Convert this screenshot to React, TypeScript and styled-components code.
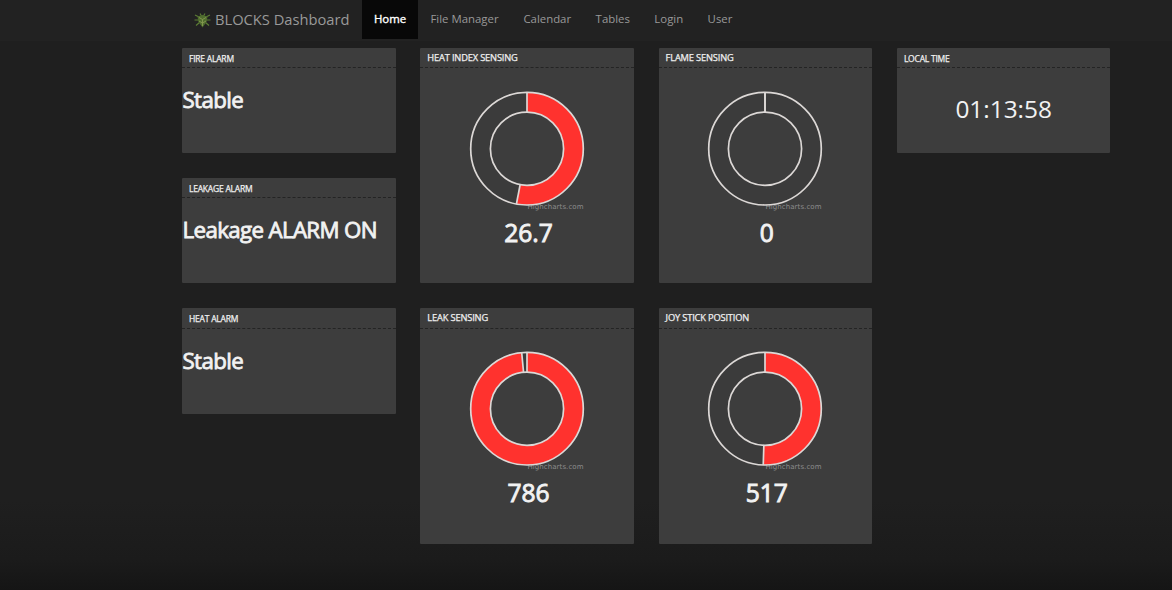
import React from 'react';
import styled, { createGlobalStyle } from 'styled-components';

const GlobalStyle = createGlobalStyle`
  * { box-sizing: border-box; }
  html, body { margin: 0; padding: 0; }
  body {
    background: #1f1f1f;
    color: #f2f2f2;
    font-family: 'Open Sans', 'Noto Sans', sans-serif;
    overflow: hidden;
  }
`;

const Page = styled.div`
  height: 590px;
  overflow: hidden;
  background: linear-gradient(to bottom, #1f1f1f 0, #1f1f1f 500px, #1b1b1b 560px, #151515 590px);
`;

const Navbar = styled.nav`
  display: flex;
  align-items: flex-start;
  height: 41px;
  padding-left: 194px;
  background: #222222;
`;

const Brand = styled.a`
  display: flex;
  align-items: center;
  width: 168px;
  height: 39px;
  padding-bottom: 1px;
  color: #999999;
  font-size: 14.7px;
  white-space: nowrap;
`;

const Logo = styled.svg`
  width: 17px;
  height: 16px;
  margin: 1px 4px 0 0;
  flex: none;
`;

const NavLink = styled.a<{ $active?: boolean; $width: number }>`
  display: flex;
  align-items: center;
  justify-content: center;
  width: ${(p) => p.$width}px;
  height: 39px;
  padding-bottom: 2px;
  font-size: 11.4px;
  white-space: nowrap;
  color: ${(p) => (p.$active ? '#ffffff' : '#999999')};
  background: ${(p) => (p.$active ? '#080808' : 'transparent')};
  -webkit-text-stroke: ${(p) => (p.$active ? '0.35px #ffffff' : '0')};
`;

const Grid = styled.main`
  display: grid;
  grid-template-columns: repeat(4, 213.5px);
  column-gap: 24.8px;
  align-items: start;
  padding: 6.7px 0 0 182px;
`;

const Column = styled.div`
  display: flex;
  flex-direction: column;
  gap: 24.7px;
`;

const Card = styled.section<{ $tall?: boolean }>`
  height: ${(p) => (p.$tall ? 235.7 : 105.5)}px;
  background: #3d3d3d;
  border-radius: 1px;
  overflow: hidden;
`;

const CardTitle = styled.h2<{ $small?: boolean }>`
  height: 20.5px;
  margin: 0;
  padding-left: 7px;
  border-bottom: 1px dashed #242424;
  color: #f0f0f0;
  font-size: ${(p) => (p.$small ? 8.5 : 9.3)}px;
  letter-spacing: ${(p) => (p.$small ? -0.22 : -0.17)}px;
  font-weight: 400;
  line-height: ${(p) => (p.$small ? 21 : 19)}px;
  text-transform: uppercase;
  white-space: nowrap;
  -webkit-text-stroke: 0.25px #f0f0f0;
`;

const Status = styled.p`
  margin: 17px 0 0 0.5px;
  font-size: 22.3px;
  letter-spacing: -0.64px;
  line-height: 30px;
  white-space: nowrap;
  -webkit-text-stroke: 0.8px #f2f2f2;
`;

const Clock = styled.p`
  margin: 25px 0 0;
  font-size: 24.4px;
  line-height: 32px;
  text-align: center;
`;

const Chart = styled.div`
  display: flex;
  flex-direction: column;
  align-items: center;
  padding-top: 21.9px;
`;

const Donut = styled.svg`
  width: 118px;
  height: 124px;
  overflow: visible;
`;

const Reading = styled.p`
  margin: 3px 0 0 3px;
  font-size: 24.6px;
  line-height: 32px;
  -webkit-text-stroke: 0.9px #f2f2f2;
`;

const CX = 59;
const CY = 58.7;
const OUTER = 56.3;
const INNER = 36.6;

function point(radius: number, fraction: number) {
  const angle = fraction * Math.PI * 2;
  return `${CX + radius * Math.sin(angle)} ${CY - radius * Math.cos(angle)}`;
}

function Gauge({ title, value, fraction }: { title: string; value: string; fraction: number }) {
  const large = fraction > 0.5 ? 1 : 0;
  const slice = `M${point(OUTER, 0)} A${OUTER} ${OUTER} 0 ${large} 1 ${point(OUTER, fraction)} L${point(INNER, fraction)} A${INNER} ${INNER} 0 ${large} 0 ${point(INNER, 0)} Z`;
  return (
    <Card $tall>
      <CardTitle>{title}</CardTitle>
      <Chart>
        <Donut viewBox="0 0 118 124">
          <text x="115.5" y="118.8" textAnchor="end" fontSize="7" fill="#8c8c8c" fontFamily="'DejaVu Sans', sans-serif" textLength="56">
            Highcharts.com
          </text>
          <circle cx={CX} cy={CY} r={(OUTER + INNER) / 2} fill="none" stroke="#3b3b3b" strokeWidth={OUTER - INNER} />
          {fraction > 0 && <path d={slice} fill="#ff322e" />}
          <g fill="none" stroke="#dcd8d6" strokeWidth="1.7">
            <circle cx={CX} cy={CY} r={OUTER} />
            <circle cx={CX} cy={CY} r={INNER} />
            <path d={`M${point(OUTER, 0)} L${point(INNER, 0)}`} />
            <path d={`M${point(OUTER, fraction)} L${point(INNER, fraction)}`} />
          </g>
        </Donut>
        <Reading>{value}</Reading>
      </Chart>
    </Card>
  );
}

function Alarm({ title, status }: { title: string; status: string }) {
  return (
    <Card>
      <CardTitle $small>{title}</CardTitle>
      <Status>{status}</Status>
    </Card>
  );
}

const links = [
  { label: 'Home', width: 56, active: true },
  { label: 'File Manager', width: 93 },
  { label: 'Calendar', width: 72.5 },
  { label: 'Tables', width: 58.5 },
  { label: 'Login', width: 53.5 },
  { label: 'User', width: 49 },
];

export default function App() {
  return (
    <Page>
      <GlobalStyle />
      <Navbar>
        <Brand>
          <Logo viewBox="0 0 17 16">
            <path
              d="M1 3 L5 5 M16 3 L12 5 M0.5 8 H5 M16.5 8 H12 M2 13.5 L5.5 10.5 M15 13.5 L11.5 10.5 M6 1.5 L7.5 4 M11 1.5 L9.5 4"
              stroke="#5d7e35"
              strokeWidth="1.1"
              fill="none"
            />
            <path d="M3.5 4.5 L8.5 3 L13.5 4.5 L12.5 10 L8.5 15.5 L4.5 10 Z" fill="#4f6d2e" />
            <path d="M5 5.5 L8.5 7.5 L12 5.5 M8.5 7.5 V14 M5 9 L8.5 11 L12 9" stroke="#869a50" strokeWidth="0.9" fill="none" />
          </Logo>
          BLOCKS Dashboard
        </Brand>
        {links.map((l) => (
          <NavLink key={l.label} $width={l.width} $active={l.active}>
            {l.label}
          </NavLink>
        ))}
      </Navbar>
      <Grid>
        <Column>
          <Alarm title="Fire Alarm" status="Stable" />
          <Alarm title="Leakage Alarm" status="Leakage ALARM ON" />
          <Alarm title="Heat Alarm" status="Stable" />
        </Column>
        <Column>
          <Gauge title="Heat Index Sensing" value="26.7" fraction={0.53} />
          <Gauge title="Leak Sensing" value="786" fraction={0.985} />
        </Column>
        <Column>
          <Gauge title="Flame Sensing" value="0" fraction={0} />
          <Gauge title="Joy Stick Position" value="517" fraction={0.505} />
        </Column>
        <Column>
          <Card>
            <CardTitle $small>Local Time</CardTitle>
            <Clock>01:13:58</Clock>
          </Card>
        </Column>
      </Grid>
    </Page>
  );
}
